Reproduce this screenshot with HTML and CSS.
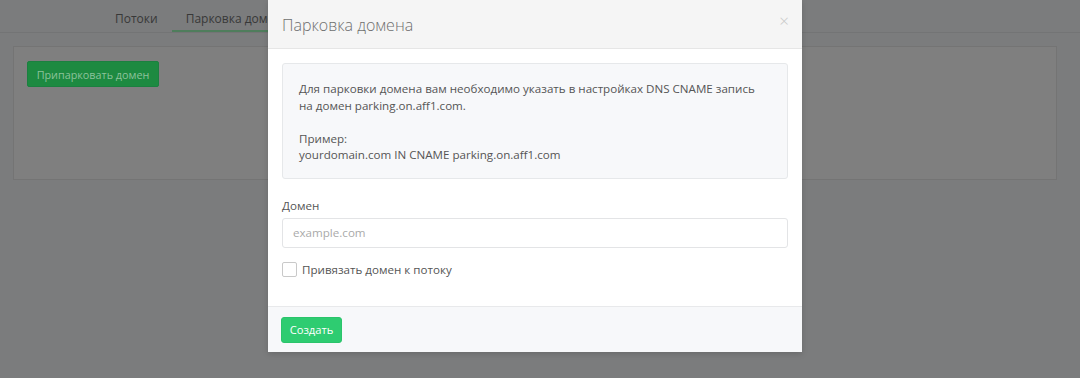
FILE: index.html
```html
<!DOCTYPE html>
<html lang="ru">
<head>
<meta charset="utf-8">
<title>Парковка домена</title>
<link rel="stylesheet" href="styles.css">
</head>
<body>
<div class="page">
  <nav class="tabs">
    <a class="tab">Потоки</a>
    <a class="tab active">Парковка доменов</a>
  </nav>
  <section class="panel">
    <button class="btn-dim">Припарковать домен</button>
  </section>
</div>

<div class="modal">
  <header class="modal-header">
    <h4 class="modal-title">Парковка домена</h4>
    <span class="close">&times;</span>
  </header>
  <div class="modal-body">
    <div class="note">
      <p>Для парковки домена вам необходимо указать в настройках DNS CNAME запись<br>на домен parking.on.aff1.com.</p>
      <p>Пример:<br>yourdomain.com IN CNAME parking.on.aff1.com</p>
    </div>
    <label class="field-label">Домен</label>
    <input class="field" type="text" placeholder="example.com">
    <label class="check">
      <span class="box"></span>
      <span>Привязать домен к потоку</span>
    </label>
  </div>
  <footer class="modal-footer">
    <button class="btn-green">Создать</button>
  </footer>
</div>
</body>
</html>
```

FILE: styles.css
```css
* { box-sizing: border-box; }
html, body { margin: 0; padding: 0; }
body {
  width: 1080px;
  height: 378px;
  overflow: hidden;
  background: #7b7c7d;
  font-family: "Open Sans", "Noto Sans", sans-serif;
  font-size: 11.6px;
  color: #555;
  position: relative;
}
.page {
  padding: 0 23px 0 13px;
}
.tabs {
  display: flex;
  height: 33px;
  padding-left: 101px;
  border-bottom: 1px solid #737475;
  margin: 0 -23px 0 -13px;
}
.tab {
  display: block;
  padding: 6px 14px 0;
  line-height: 26px;
  font-size: 12px;
  color: #383838;
}
.tab.active {
  border-bottom: 2px solid #4f7d5c;
  line-height: 25px;
}
.panel {
  margin-top: 13px;
  width: 1044px;
  height: 134px;
  background: #7f7f7f;
  border: 1px solid #747474;
  padding: 14px 13px;
}
.btn-dim {
  font-family: inherit;
  font-size: 10.8px;
  height: 26px;
  width: 132px;
  padding: 0;
  background: #1d8a41;
  color: #8cc29b;
  border: 1px solid #1b8040;
  border-radius: 2px;
}
.modal {
  position: absolute;
  left: 268px;
  top: 0;
  width: 534px;
  background: #fff;
  box-shadow: 0 2px 6px rgba(0,0,0,0.15);
}
.modal-header {
  height: 49px;
  background: #f5f5f5;
  border-bottom: 1px solid #e6e6e6;
  display: flex;
  align-items: center;
  justify-content: space-between;
  padding: 0 14px;
}
.modal-title {
  margin: 0;
  font-weight: 300;
  font-size: 16px;
  color: #6f6f6f;
  padding-top: 1px;
}
.close {
  font-size: 17px;
  font-weight: 300;
  color: #c8c8c8;
  margin-top: -8px;
  margin-right: -1px;
}
.modal-body {
  padding: 14px 14px 28px;
}
.note {
  background: #f7f8fa;
  border: 1px solid #e6e8ea;
  border-radius: 3px;
  padding: 17px 16px 14px;
  line-height: 16.5px;
  color: #555;
}
.note p { margin: 0; }
.note p + p { margin-top: 16.5px; }
.field-label {
  display: block;
  margin-top: 18px;
  line-height: 17px;
  color: #555;
}
.field {
  display: block;
  width: 100%;
  height: 30px;
  margin-top: 4px;
  border: 1px solid #e3e4e6;
  border-radius: 3px;
  padding: 0 10px;
  font-family: inherit;
  font-size: 11.6px;
  color: #555;
}
.field::placeholder { color: #aaa; }
.check {
  display: flex;
  align-items: center;
  gap: 5px;
  margin-top: 13px;
  line-height: 17px;
  color: #555;
}
.box {
  width: 15px;
  height: 15px;
  border: 1px solid #c9c9c9;
  border-radius: 2px;
  background: #fff;
}
.modal-footer {
  background: #f7f8fa;
  border-top: 1px solid #e8e9eb;
  padding: 10px 13px 9px;
}
.btn-green {
  font-family: inherit;
  font-size: 11.2px;
  height: 26px;
  width: 61px;
  padding: 0;
  background: #2ecc71;
  color: #fff;
  border: 1px solid #2bc46b;
  border-radius: 3px;
}
```
